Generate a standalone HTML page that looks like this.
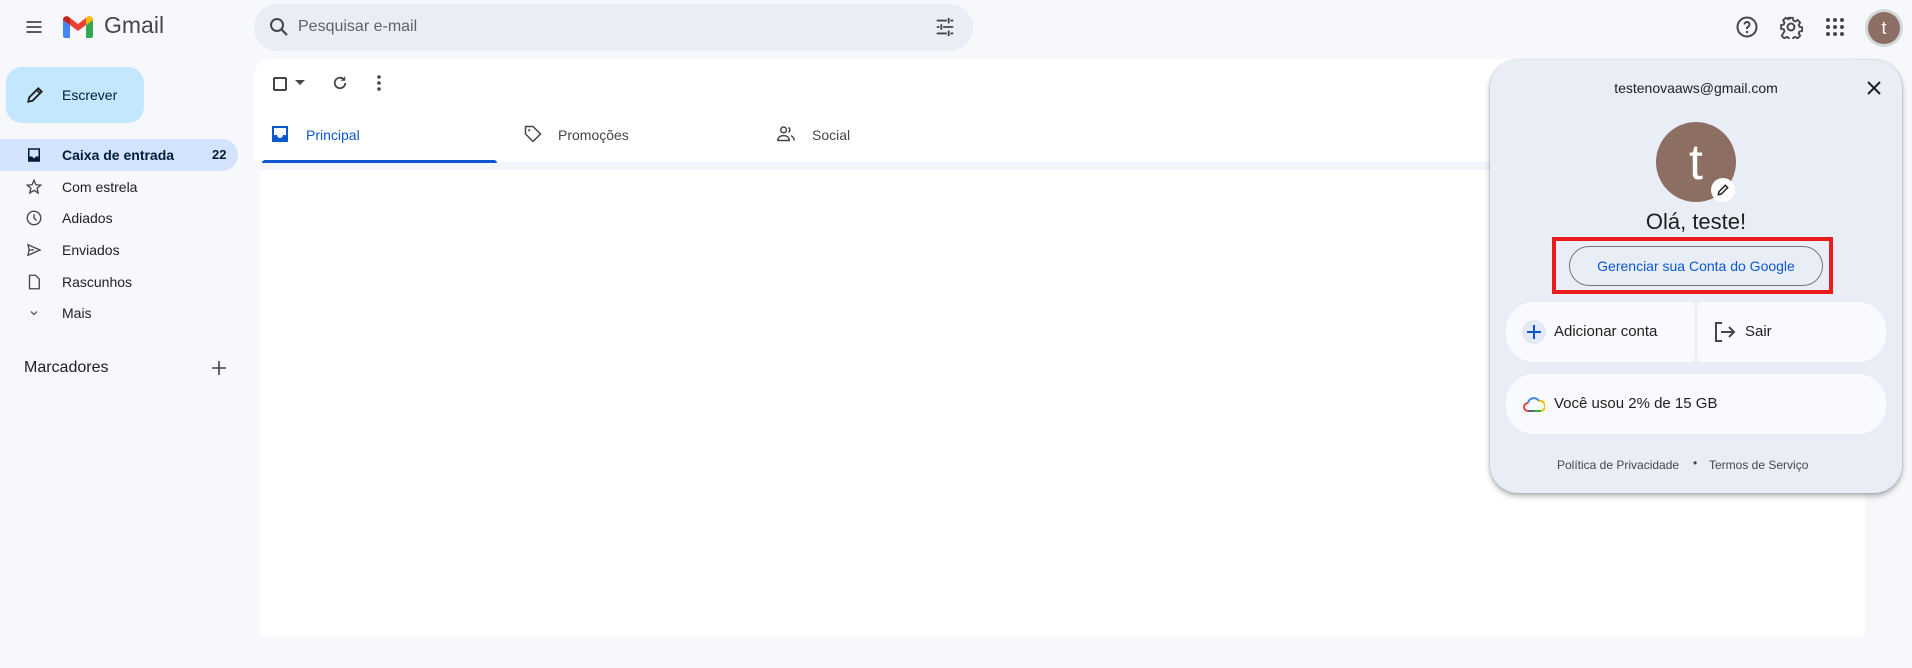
<!DOCTYPE html>
<html><head><meta charset="utf-8">
<style>
*{box-sizing:border-box;margin:0;padding:0}
body{width:1912px;height:668px;background:#f6f8fc;font-family:"Liberation Sans",Arial,sans-serif;position:relative;overflow:hidden;color:#1f1f1f}
.abs{position:absolute;white-space:nowrap}
.nav{position:absolute;left:0;height:32px;width:238px;font-size:14px;color:#202124;white-space:nowrap}
.nav .ic{position:absolute;left:25px;top:7px;width:18px;height:18px}
.nav span{position:absolute;left:62px;top:8px}
svg{display:block}
</style></head><body>
<!-- top bar -->
<svg class="abs" style="left:24px;top:17px" width="20" height="20" viewBox="0 0 24 24"><path d="M3 6h18M3 12h18M3 18h18" stroke="#444746" stroke-width="2"/></svg>
<svg class="abs" style="left:63px;top:16px" width="30" height="22" viewBox="0 0 30 22"><path d="M0 4v16c0 1 1 2 2 2h5V9z" fill="#4285f4"/><path d="M23 9v13h5c1 0 2-1 2-2V4z" fill="#34a853"/><path d="M0 4l7 5 8 6 8-6 7-5c0-3-3-5-6-3l-9 7-9-7C3-1 0 1 0 4z" fill="#ea4335"/><path d="M23 9l7-5c0-3-3-5-6-3l-1 1z" fill="#fbbc04"/><path d="M0 4l7 5V2L6 1C3-1 0 1 0 4z" fill="#c5221f"/></svg>
<div class="abs" style="left:104px;top:12px;font-size:23px;color:#444746">Gmail</div>
<div class="abs" style="left:254px;top:4px;width:719px;height:47px;border-radius:24px;background:#e9eef6"></div>
<svg class="abs" style="left:267px;top:15px" width="24" height="24" viewBox="0 0 24 24"><circle cx="10" cy="10" r="6" fill="none" stroke="#444746" stroke-width="2"/><path d="M14.5 14.5L20 20" stroke="#444746" stroke-width="2.2"/></svg>
<div class="abs" style="left:298px;top:18px;font-size:16px;color:#5f6368">Pesquisar e-mail</div>
<svg class="abs" style="left:934px;top:16px" width="22" height="22" viewBox="0 0 24 24"><path d="M3 5h11M18 5h3M16 2v6M3 12h3M10 12h11M8 9v6M3 19h11M18 19h3M16 16v6" stroke="#444746" stroke-width="2"/></svg>
<svg class="abs" style="left:1735px;top:15px" width="24" height="24" viewBox="0 0 24 24"><circle cx="12" cy="12" r="9.5" fill="none" stroke="#444746" stroke-width="2"/><path d="M9.5 9.5a2.5 2.5 0 1 1 3.5 2.3c-.7.4-1 .9-1 1.7v.5" fill="none" stroke="#444746" stroke-width="2"/><circle cx="12" cy="17" r="1.2" fill="#444746"/></svg>
<svg class="abs" style="left:1779px;top:15px" width="24" height="24" viewBox="0 0 24 24"><path d="M10 2h4l.6 3 2 1 2.6-1.6 2.8 2.8-1.6 2.6.8 2 3 .6v4l-3 .6-.8 2 1.6 2.6-2.8 2.8-2.6-1.6-2 .8-.6 3h-4l-.6-3-2-.8-2.6 1.6-2.8-2.8L5 16.6l-.8-2-3-.6v-4l3-.6.8-2L3.4 4.8 6.2 2 8.8 3.6l2-.8z" transform="scale(.92) translate(1 1)" fill="none" stroke="#444746" stroke-width="2"/><circle cx="12" cy="12" r="3.5" fill="none" stroke="#444746" stroke-width="2"/></svg>
<svg class="abs" style="left:1825px;top:17px" width="20" height="20" viewBox="0 0 20 20" fill="#444746"><circle cx="3" cy="3" r="2"/><circle cx="10" cy="3" r="2"/><circle cx="17" cy="3" r="2"/><circle cx="3" cy="10" r="2"/><circle cx="10" cy="10" r="2"/><circle cx="17" cy="10" r="2"/><circle cx="3" cy="17" r="2"/><circle cx="10" cy="17" r="2"/><circle cx="17" cy="17" r="2"/></svg>
<div class="abs" style="left:1865px;top:9px;width:38px;height:38px;border-radius:50%;background:#d3d6db"></div>
<div class="abs" style="left:1868px;top:12px;width:32px;height:32px;border-radius:50%;background:#8d6e63;color:#fff;font-size:18px;text-align:center;line-height:32px">t</div>

<!-- compose -->
<div class="abs" style="left:6px;top:67px;width:138px;height:56px;border-radius:16px;background:#c2e7ff"></div>
<svg class="abs" style="left:25px;top:85px" width="20" height="20" viewBox="0 0 24 24"><path d="M4 20l1-5L16 4l4 4L9 19z" fill="none" stroke="#1f1f1f" stroke-width="2.2"/><path d="M14 6l4 4" stroke="#1f1f1f" stroke-width="2"/></svg>
<div class="abs" style="left:62px;top:87px;font-size:14px;color:#001d35;font-weight:500">Escrever</div>

<!-- nav -->
<div class="abs" style="left:0;top:139px;width:238px;height:32px;background:#d3e3fd;border-radius:0 16px 16px 0"></div>
<div class="nav" style="top:139px;font-weight:bold;color:#001d35"><svg class="ic" viewBox="0 0 24 24"><path d="M4 3h16v18H4z" fill="#001d35"/><path d="M6 5h12v9h-4a2 2 0 0 1-4 0H6z" fill="#d3e3fd"/></svg><span>Caixa de entrada</span><span style="left:212px;font-size:13px">22</span></div>
<div class="nav" style="top:171px"><svg class="ic" viewBox="0 0 24 24"><path d="M12 3l2.6 6 6.4.5-4.9 4.2 1.5 6.3L12 16.6 6.4 20l1.5-6.3L3 9.5 9.4 9z" fill="none" stroke="#444746" stroke-width="1.8"/></svg><span>Com estrela</span></div>
<div class="nav" style="top:202px"><svg class="ic" viewBox="0 0 24 24"><circle cx="12" cy="12" r="9" fill="none" stroke="#444746" stroke-width="1.8"/><path d="M12 7v5l3.5 3.5" fill="none" stroke="#444746" stroke-width="1.8"/></svg><span>Adiados</span></div>
<div class="nav" style="top:234px"><svg class="ic" viewBox="0 0 24 24"><path d="M4 5l16 7-16 7 1.5-7z M5.5 12H12" fill="none" stroke="#444746" stroke-width="1.8"/></svg><span>Enviados</span></div>
<div class="nav" style="top:266px"><svg class="ic" viewBox="0 0 24 24"><path d="M6 3h8l5 5v13H6z" fill="none" stroke="#444746" stroke-width="1.8"/></svg><span>Rascunhos</span></div>
<div class="nav" style="top:297px"><svg class="ic" viewBox="0 0 24 24"><path d="M8 10l4 4 4-4" fill="none" stroke="#444746" stroke-width="1.6"/></svg><span>Mais</span></div>
<div class="abs" style="left:24px;top:359px;font-size:16px;color:#1f1f1f;font-weight:500">Marcadores</div>
<svg class="abs" style="left:211px;top:360px" width="16" height="16" viewBox="0 0 16 16"><path d="M8 1v14M1 8h14" stroke="#444746" stroke-width="1.6"/></svg>

<!-- main -->
<div class="abs" style="left:254px;top:59px;width:1611px;height:577px;background:#fff;border-radius:16px 16px 0 0"></div>
<div class="abs" style="left:254px;top:162px;width:1611px;height:8px;background:#f2f5fa"></div>
<div class="abs" style="left:254px;top:162px;width:6px;height:474px;background:#f6f8fc"></div>
<div class="abs" style="left:262px;top:160px;width:235px;height:3px;background:#0b57d0;border-radius:3px 3px 0 0"></div>
<div class="abs" style="left:273px;top:77px;width:14px;height:14px;border:2px solid #444746;border-radius:2px"></div>
<svg class="abs" style="left:295px;top:80px" width="10" height="6"><path d="M0 0h10L5 5z" fill="#444746"/></svg>
<svg class="abs" style="left:331px;top:74px" width="18" height="18" viewBox="0 0 24 24"><path d="M19 12a7 7 0 1 1-2-5" fill="none" stroke="#444746" stroke-width="2.4"/><path d="M19 3v6h-6z" fill="#444746"/></svg>
<svg class="abs" style="left:376px;top:74px" width="6" height="18"><circle cx="3" cy="3" r="1.8" fill="#444746"/><circle cx="3" cy="9" r="1.8" fill="#444746"/><circle cx="3" cy="15" r="1.8" fill="#444746"/></svg>
<svg class="abs" style="left:272px;top:126px" width="16" height="16" viewBox="0 0 16 16"><path d="M0 0h16v16H0z" fill="#0b57d0"/><path d="M2 2h12v7h-3a3 3 0 0 1-6 0H2z" fill="#fff"/></svg>
<div class="abs" style="left:306px;top:127px;font-size:14px;color:#0b57d0;font-weight:500">Principal</div>
<svg class="abs" style="left:523px;top:124px" width="20" height="20" viewBox="0 0 24 24"><path d="M3 3h9l9 9-9 9-9-9z" fill="none" stroke="#444746" stroke-width="1.8"/><circle cx="7.5" cy="7.5" r="1.3" fill="#444746"/></svg>
<div class="abs" style="left:558px;top:127px;font-size:14px;color:#444746">Promoções</div>
<svg class="abs" style="left:776px;top:125px" width="20" height="18" viewBox="0 0 24 22"><circle cx="9" cy="6" r="3.5" fill="none" stroke="#444746" stroke-width="1.8"/><path d="M2 19c0-4 3-6 7-6s7 2 7 6z" fill="none" stroke="#444746" stroke-width="1.8"/><path d="M15 3a3.5 3.5 0 0 1 0 6M18 13c2 1 4 3 4 6" fill="none" stroke="#444746" stroke-width="1.8"/></svg>
<div class="abs" style="left:812px;top:127px;font-size:14px;color:#444746">Social</div>

<!-- popup -->
<div class="abs" style="left:1490px;top:60px;width:412px;height:433px;border-radius:28px;background:#e9eef6;box-shadow:0 3px 6px rgba(0,0,0,.3),0 0 2px rgba(0,0,0,.2)"></div>
<div class="abs" style="left:1490px;top:80px;width:412px;text-align:center;font-size:14px;font-weight:500;color:#1f1f1f">testenovaaws@gmail.com</div>
<svg class="abs" style="left:1866px;top:80px" width="16" height="16"><path d="M2 2l12 12M14 2L2 14" stroke="#1f1f1f" stroke-width="2"/></svg>
<div class="abs" style="left:1656px;top:122px;width:80px;height:80px;border-radius:50%;background:#8d6e63;color:#fff;font-size:50px;text-align:center;line-height:80px">t</div>
<div class="abs" style="left:1711px;top:178px;width:24px;height:24px;border-radius:50%;background:#fff"></div>
<svg class="abs" style="left:1716px;top:183px" width="14" height="14" viewBox="0 0 24 24"><path d="M4 20l1-5L16 4l4 4L9 19z" fill="none" stroke="#1f1f1f" stroke-width="2.5"/></svg>
<div class="abs" style="left:1490px;top:209px;width:412px;text-align:center;font-size:22px;color:#1f1f1f">Olá, teste!</div>
<div class="abs" style="left:1552px;top:237px;width:281px;height:57px;border:4px solid #e81c1c"></div>
<div class="abs" style="left:1569px;top:246px;width:254px;height:40px;border:1px solid #747775;border-radius:20px;text-align:center;line-height:38px;font-size:14px;font-weight:500;color:#0b57d0">Gerenciar sua Conta do Google</div>
<div class="abs" style="left:1506px;top:302px;width:189px;height:60px;background:#f8fafd;border-radius:28px 4px 4px 28px"></div>
<div class="abs" style="left:1697px;top:302px;width:189px;height:60px;background:#f8fafd;border-radius:4px 28px 28px 4px"></div>
<div class="abs" style="left:1522px;top:320px;width:24px;height:24px;border-radius:50%;background:#e3eaf5"></div>
<svg class="abs" style="left:1526px;top:324px" width="16" height="16"><path d="M8 1v14M1 8h14" stroke="#0b57d0" stroke-width="2"/></svg>
<div class="abs" style="left:1554px;top:323px;font-size:15px;font-weight:500;color:#1f1f1f">Adicionar conta</div>
<svg class="abs" style="left:1714px;top:322px" width="22" height="20" viewBox="0 0 22 20"><path d="M8 1H2v18h6" fill="none" stroke="#444746" stroke-width="2"/><path d="M7 10h13M15 5l5 5-5 5" fill="none" stroke="#444746" stroke-width="2"/></svg>
<div class="abs" style="left:1745px;top:323px;font-size:15px;font-weight:500;color:#1f1f1f">Sair</div>
<div class="abs" style="left:1506px;top:374px;width:380px;height:60px;background:#f8fafd;border-radius:28px"></div>
<svg class="abs" style="left:1523px;top:396px" width="22" height="16" viewBox="0 0 22 16"><path d="M5 15a4 4 0 0 1 0-8" fill="none" stroke="#ea4335" stroke-width="2"/><path d="M5 7a6 6 0 0 1 11-2" fill="none" stroke="#4285f4" stroke-width="2"/><path d="M16 5a5 5 0 0 1 2 10" fill="none" stroke="#fbbc04" stroke-width="2"/><path d="M18 15H5" stroke="#34a853" stroke-width="2"/><path d="M11 15H5" stroke="#5f6368" stroke-width="2"/></svg>
<div class="abs" style="left:1554px;top:395px;font-size:15px;font-weight:500;color:#1f1f1f">Você usou 2% de 15 GB</div>
<div class="abs" style="left:1557px;top:458px;font-size:12px;color:#444746">Política de Privacidade</div>
<div class="abs" style="left:1693px;top:456px;font-size:12px;color:#444746">•</div>
<div class="abs" style="left:1709px;top:458px;font-size:12px;color:#444746">Termos de Serviço</div>
</body></html>
